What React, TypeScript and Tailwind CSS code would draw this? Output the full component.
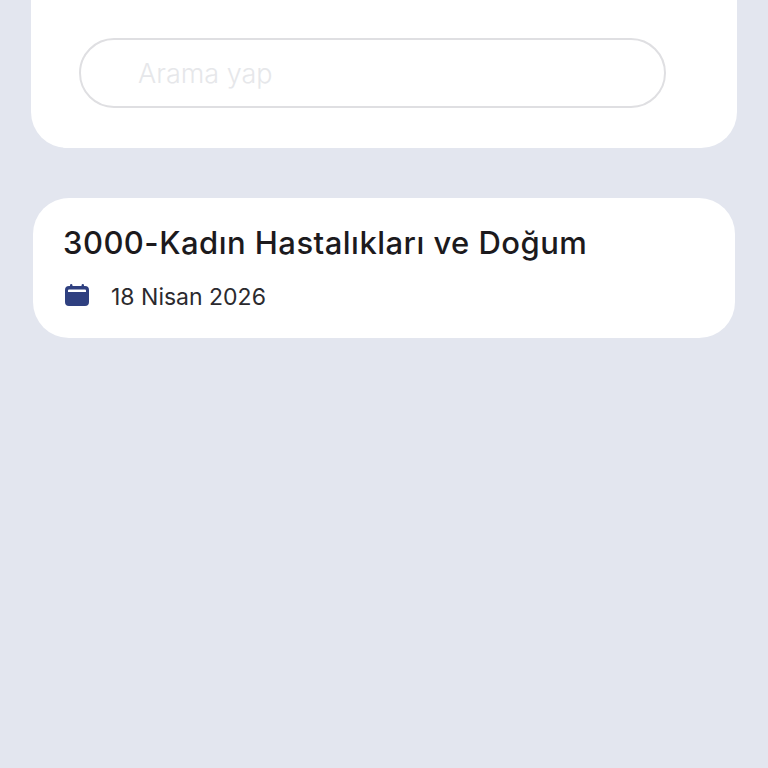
export default function App() {
  return (
    <div className="h-[768px] w-[768px] overflow-hidden bg-[#e3e6ef] font-['Inter',sans-serif]">
      {/* Arama kartı */}
      <div className="mx-[31px] h-[148px] rounded-b-[36px] bg-white px-[48px] pt-[38px]">
        <div className="flex h-[70px] w-[587px] items-center rounded-[35px] border-2 border-[#dfdfe2] pl-[57px]">
          <input
            placeholder="Arama yap"
            className="mt-[3px] w-full bg-transparent text-[27px] font-light outline-none placeholder:text-[#e6e7ea]"
          />
        </div>
      </div>

      {/* Sonuç kartı */}
      <div className="mx-[33px] mt-[50px] h-[140px] rounded-[36px] bg-white pl-[31px] pt-[25px]">
        <div className="-ml-[1px] text-[31px] leading-[40px] font-medium tracking-[0.47px] text-[#1c1a1d]">
          3000-Kadın Hastalıkları ve Doğum
        </div>
        <div className="mt-[18px] flex items-center gap-[22px]">
          <svg width="24" height="22" viewBox="0 0 24 22" className="-mt-[4px] ml-[1px]">
            <rect x="5" y="0" width="2.4" height="5" rx="1.2" fill="#2f4080" />
            <rect x="16.6" y="0" width="2.4" height="5" rx="1.2" fill="#2f4080" />
            <path
              fillRule="evenodd"
              d="M4 2h16a4 4 0 0 1 4 4v12a4 4 0 0 1-4 4H4a4 4 0 0 1-4-4V6a4 4 0 0 1 4-4zM3 6.5v1.5h18V6.5a1 1 0 0 0-1-1H4a1 1 0 0 0-1 1z"
              fill="#2f4080"
            />
          </svg>
          <span className="text-[23px] leading-[32px] text-[#2b2a2e]">18 Nisan 2026</span>
        </div>
      </div>
    </div>
  );
}
